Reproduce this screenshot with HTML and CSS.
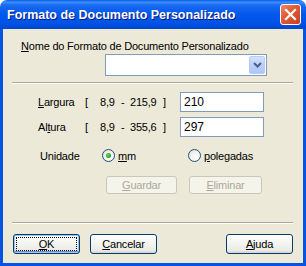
FILE: index.html
```html
<!DOCTYPE html>
<html>
<head>
  <title>Formato de Documento Personalizado</title>
  <link rel="stylesheet" href="styles.css">
</head>
<body>

  <div class="window">
    <div class="titlebar">
      <span class="title">Formato de Documento Personalizado</span>
      <button class="close" aria-label="Fechar">
        <svg width="13" height="13" viewBox="0 0 13 13">
          <path d="M2 2 L11 11 M11 2 L2 11" stroke="#fff" stroke-width="2.2" stroke-linecap="square"/>
        </svg>
      </button>
    </div>

    <div class="frame">
      <div class="content">
        <div class="field-label"><u>N</u>ome do Formato de Documento Personalizado</div>
        <div class="combo">
          <div class="combo-btn">
            <svg width="9" height="6" viewBox="0 0 9 6">
              <path d="M1 1 L4.5 4.5 L8 1" stroke="#4d6185" stroke-width="2" fill="none"/>
            </svg>
          </div>
        </div>

        <div class="separator"></div>

        <div class="size-row">
          <span class="size-name"><u>L</u>argura</span>
          <span class="bracket">[</span>
          <span class="min">8,9</span>
          <span class="dash">-</span>
          <span class="max">215,9</span>
          <span class="bracket-end">]</span>
          <div class="textbox">210</div>
        </div>

        <div class="size-row">
          <span class="size-name">Al<u>t</u>ura</span>
          <span class="bracket">[</span>
          <span class="min">8,9</span>
          <span class="dash">-</span>
          <span class="max">355,6</span>
          <span class="bracket-end">]</span>
          <div class="textbox">297</div>
        </div>

        <div class="unit-row">
          <span class="unit-name">Unidade</span>
          <label class="radio-option first">
            <span class="radio checked"></span>
            <span><u>m</u>m</span>
          </label>
          <label class="radio-option">
            <span class="radio"></span>
            <span><u>p</u>olegadas</span>
          </label>
        </div>

        <div class="action-row">
          <button class="btn disabled save"><u>G</u>uardar</button>
          <button class="btn disabled remove"><u>E</u>liminar</button>
        </div>

        <div class="separator bottom"></div>

        <div class="footer">
          <button class="btn default"><span class="focus"><u>O</u>K</span></button>
          <button class="btn"><u>C</u>ancelar</button>
          <div class="spacer"></div>
          <button class="btn"><u>A</u>juda</button>
        </div>
      </div>
    </div>
  </div>

</body>
</html>
```

FILE: styles.css
```css
body {
  margin: 0;
  padding: 0;
  background-color: #ffffff;
  font-family: 'Liberation Sans', Arial, sans-serif;
  font-size: 11px;
  letter-spacing: -0.2px;
  color: black;
}

.window {
  width: 306px;
  height: 266px;
  display: flex;
  flex-direction: column;
}

/* Title bar */
.titlebar {
  height: 29px;
  display: flex;
  align-items: center;
  padding: 0 5px 0 7px;
  border-radius: 7px 7px 0 0;
  background: linear-gradient(
    to bottom,
    #0a5fef 0%,
    #3c8ef9 8%,
    #1a6af2 18%,
    #0058ec 50%,
    #0053e5 80%,
    #0046cf 100%
  );
  box-sizing: border-box;
}

.titlebar .title {
  flex: 1;
  color: white;
  font-weight: bold;
  font-size: 12.5px;
  letter-spacing: 0;
  text-shadow: 1px 1px #0a1883;
  padding-top: 1px;
}

.titlebar .close {
  width: 21px;
  height: 21px;
  margin: 0;
  padding: 0;
  border: 1px solid white;
  border-radius: 3px;
  background: linear-gradient(135deg, #ee8a6a 0%, #e25c37 40%, #c8401d 100%);
  display: flex;
  align-items: center;
  justify-content: center;
  box-sizing: border-box;
}

/* Window frame */
.frame {
  flex: 1;
  border: 3px solid #0455e3;
  border-top: none;
  background-color: #ece9d8;
  display: flex;
}

.content {
  flex: 1;
  display: flex;
  flex-direction: column;
  padding-top: 11px;
}

.field-label {
  padding-left: 18px;
  line-height: 13px;
}

.combo {
  margin: 1px 0 0 102px;
  width: 162px;
  height: 22px;
  box-sizing: border-box;
  border: 1px solid #7f9db9;
  background-color: white;
  display: flex;
  justify-content: flex-end;
  padding: 1px;
}

.combo-btn {
  width: 16px;
  height: 18px;
  border-radius: 2px;
  background: linear-gradient(to bottom, #d4e2fd 0%, #bccffb 50%, #b0c6f8 100%);
  border: 1px solid #b6cbf7;
  box-sizing: border-box;
  display: flex;
  align-items: center;
  justify-content: center;
}

.separator {
  margin: 6px 10px 0 9px;
  border-top: 1px solid #aca899;
  border-bottom: 1px solid white;
  height: 0;
}

/* Size rows */
.size-row {
  display: flex;
  align-items: center;
  padding-left: 35px;
  margin-top: 8px;
}

.size-row + .size-row {
  margin-top: 5px;
}

.size-name { width: 47px; }
.bracket { width: 15px; }
.min { width: 21px; }
.dash { width: 9px; }
.max { width: 33px; }
.bracket-end { width: 17px; }

.textbox {
  width: 84px;
  height: 20px;
  box-sizing: border-box;
  border: 1px solid #7f9db9;
  background-color: white;
  padding: 3px 0 0 3px;
  font-size: 12px;
  letter-spacing: 0;
  line-height: 13px;
}

/* Units */
.unit-row {
  display: flex;
  align-items: center;
  padding-left: 37px;
  margin-top: 12px;
  height: 13px;
}

.unit-name { width: 62px; }

.radio-option {
  display: flex;
  align-items: center;
  gap: 3px;
}

.radio-option.first { width: 86px; }

.radio {
  width: 13px;
  height: 13px;
  box-sizing: border-box;
  border-radius: 50%;
  border: 1px solid #1c5180;
  background: radial-gradient(circle at 65% 65%, #ffffff 0%, #f3f2ed 45%, #dcd9cf 100%);
  display: flex;
  align-items: center;
  justify-content: center;
}

.radio.checked::after {
  content: '';
  width: 5px;
  height: 5px;
  border-radius: 50%;
  background: radial-gradient(circle at 40% 40%, #5ed65e 0%, #21a121 70%, #1b8c1b 100%);
}

/* Buttons */
.btn {
  height: 20px;
  width: 67px;
  margin: 0;
  padding: 0;
  box-sizing: border-box;
  border: 1px solid #003c74;
  border-radius: 3px;
  background: linear-gradient(to bottom, #ffffff 0%, #f5f5f2 40%, #ecebe6 85%, #d6d0c5 100%);
  font-family: 'Liberation Sans', Arial, sans-serif;
  font-size: 11px;
  letter-spacing: -0.2px;
  color: black;
  display: flex;
  align-items: center;
  justify-content: center;
}

.btn.default {
  box-shadow: inset 0 0 0 1px #a6c0ec, inset 0 -1px 0 1px #6a93d8;
}

.btn .focus {
  display: flex;
  align-items: center;
  justify-content: center;
  width: 61px;
  height: 14px;
  box-sizing: border-box;
  border: 1px dotted #000;
}

.action-row {
  display: flex;
  gap: 12px;
  margin: 14px 0 0 103px;
}

.btn.disabled {
  height: 18px;
  border-color: #c9c7ba;
  background: #f5f4ea;
  color: #aca899;
}

.btn.save { width: 71px; }
.btn.remove { width: 73px; }

.separator.bottom {
  margin-top: 28px;
}

.footer {
  display: flex;
  gap: 10px;
  margin: 10px 10px 0 10px;
}

.footer .spacer {
  flex: 1;
}
```
